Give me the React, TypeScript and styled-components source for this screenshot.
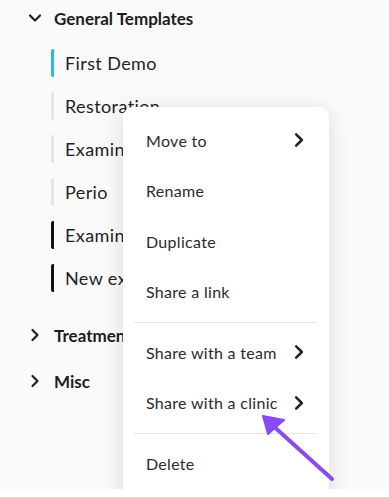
import styled, { createGlobalStyle } from 'styled-components';

const Global = createGlobalStyle`
  html, body { margin: 0; padding: 0; background: #ffffff; }
  body { font-family: Lato, "Noto Sans", sans-serif; color: #222; }
`;

const Page = styled.div`
  position: relative;
  height: 489px;
  background: #fafafa;
  overflow: hidden;
`;

const Tree = styled.div`
  display: flex;
  flex-direction: column;
  padding: 5px 0 0 28px;
`;

const Group = styled.div`
  display: flex;
  flex-direction: column;
`;

const GroupHeader = styled.div<{ $open?: boolean }>`
  display: flex;
  align-items: center;
  gap: 12px;
  height: 26px;
  margin-bottom: ${({ $open }) => ($open ? '18px' : '20px')};
  font-size: 17px;
  font-weight: 700;
  color: #1d1d1f;
`;

const Items = styled.div`
  display: flex;
  flex-direction: column;
  gap: 15px;
  padding-left: 23px;
  margin-bottom: 30px;
`;

const Item = styled.div<{ $bar: string }>`
  display: flex;
  align-items: center;
  height: 28px;
  padding-left: 11px;
  border-left: 3px solid ${({ $bar }) => $bar};
  border-radius: 2px;
  font-size: 18px;
  letter-spacing: 0.4px;
  color: #1f1f24;
  white-space: nowrap;
`;

const Menu = styled.div`
  position: absolute;
  left: 123px;
  top: 107px;
  width: 206px;
  height: 400px;
  background: #ffffff;
  border-radius: 10px;
  box-shadow: 0 4px 22px rgba(0, 0, 0, 0.13);
  padding: 8px 0 0;
  display: flex;
  flex-direction: column;
`;

const MenuItem = styled.div`
  display: flex;
  align-items: center;
  justify-content: space-between;
  height: 50.5px;
  padding: 0 22px 0 23px;
  font-size: 16px;
  letter-spacing: 0.3px;
  color: #2b2b2e;
`;

const Divider = styled.div`
  height: 1px;
  margin: 4.5px 12px 4.5px 11px;
  background: #e6e6e6;
`;

const Arrow = styled.svg`
  position: absolute;
  left: 255px;
  top: 405px;
`;

const Down = () => (
  <svg width="14" height="14" viewBox="0 0 14 14">
    <path d="M2 4.5 L7 9.5 L12 4.5" fill="none" stroke="#222" strokeWidth="2.2" strokeLinecap="round" strokeLinejoin="round" />
  </svg>
);

const Right = ({ size = 14 }: { size?: number }) => (
  <svg width={size} height={size} viewBox="0 0 14 14">
    <path d="M4.5 2 L9.5 7 L4.5 12" fill="none" stroke="#222" strokeWidth="2.2" strokeLinecap="round" strokeLinejoin="round" />
  </svg>
);

const items = [
  { name: 'First Demo', bar: '#1ec3cf' },
  { name: 'Restoration', bar: '#e6e6e6' },
  { name: 'Examination', bar: '#e6e6e6' },
  { name: 'Perio', bar: '#e6e6e6' },
  { name: 'Examination 2', bar: '#111111' },
  { name: 'New exam', bar: '#111111' },
];

export default function App() {
  return (
    <>
      <Global />
      <Page>
        <Tree>
          <Group>
            <GroupHeader $open>
              <Down />
              General Templates
            </GroupHeader>
            <Items>
              {items.map((it) => (
                <Item key={it.name} $bar={it.bar}>{it.name}</Item>
              ))}
            </Items>
          </Group>
          <GroupHeader>
            <Right />
            Treatment Templates
          </GroupHeader>
          <GroupHeader>
            <Right />
            Misc
          </GroupHeader>
        </Tree>

        <Menu>
          <MenuItem>Move to <Right size={16} /></MenuItem>
          <MenuItem>Rename</MenuItem>
          <MenuItem>Duplicate</MenuItem>
          <MenuItem>Share a link</MenuItem>
          <Divider />
          <MenuItem>Share with a team <Right size={16} /></MenuItem>
          <MenuItem>Share with a clinic <Right size={16} /></MenuItem>
          <Divider />
          <MenuItem>Delete</MenuItem>
        </Menu>

        <Arrow width="90" height="80" viewBox="0 0 90 80">
          <path d="M77 74 L15 18" stroke="#8a4af3" strokeWidth="4" strokeLinecap="round" />
          <path d="M8 11 L29 15 L13 29 Z" fill="#8a4af3" stroke="#8a4af3" strokeWidth="2" strokeLinejoin="round" />
        </Arrow>
      </Page>
    </>
  );
}
